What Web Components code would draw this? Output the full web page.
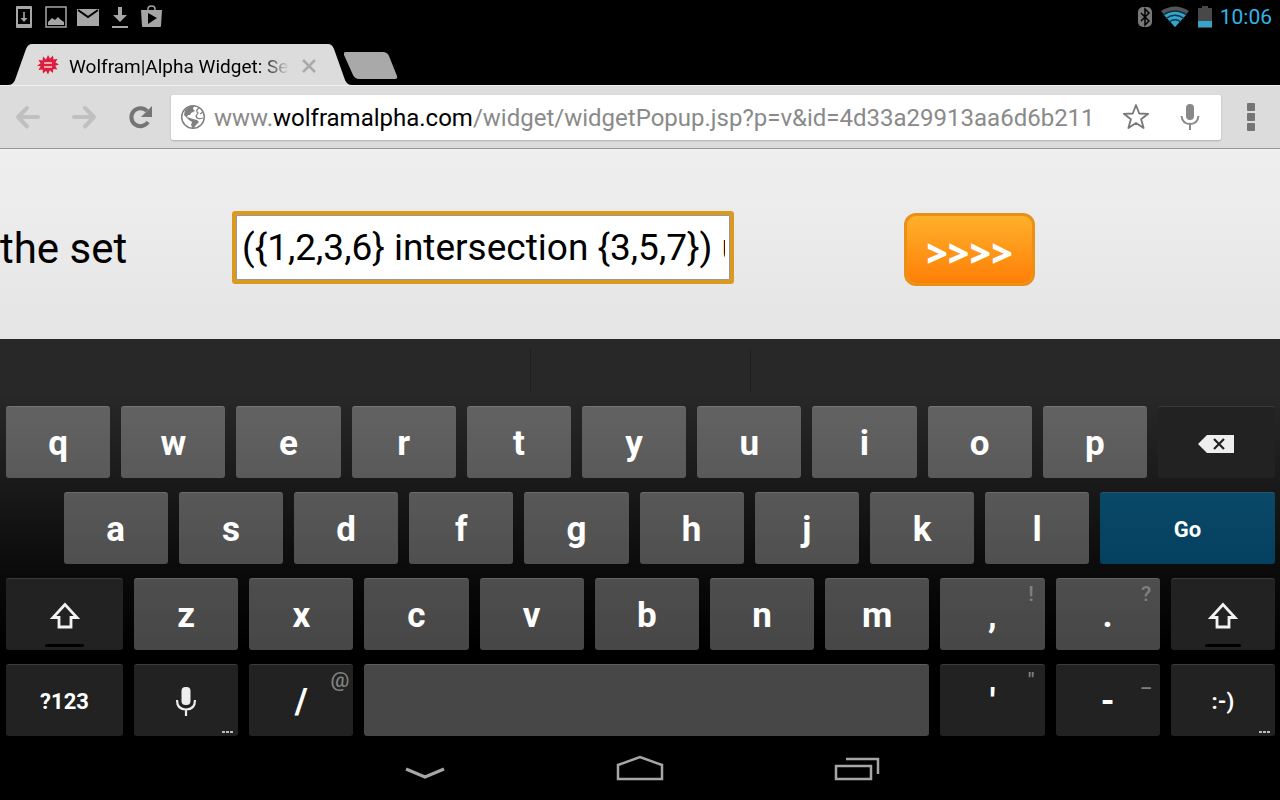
<!DOCTYPE html>
<html lang="en">
<head>
<meta charset="utf-8">
<meta name="viewport" content="width=device-width, initial-scale=1">
<title>Wolfram|Alpha Widget: Set Operations</title>
<style>
    html, body {
        margin: 0;
        background: #000;
    }

    body {
        min-height: 100vh;
        display: flex;
        flex-direction: column;
        font-family: Roboto, "Noto Sans", sans-serif;
        overflow-x: hidden;
    }

    widget-page {
        flex: 1;
    }
</style>
</head>
<body>
<status-bar></status-bar>
<tab-strip>Wolfram|Alpha Widget: Set Operations</tab-strip>
<browser-toolbar></browser-toolbar>
<widget-page>the set</widget-page>
<soft-keyboard></soft-keyboard>
<system-nav></system-nav>

<script>
class StatusBar extends HTMLElement {
    connectedCallback() {
        this.attachShadow({ mode: 'open' });
        this.shadowRoot.innerHTML = `
            <style>
                :host {
                    display: flex;
                    justify-content: space-between;
                    height: 34px;
                    padding: 0 8px 0 14px;
                    background: #000;
                    color: #33b5e5;
                }

                .group {
                    display: flex;
                    align-items: center;
                    gap: 8px;
                }

                svg {
                    display: block;
                }

                time {
                    font-size: 21px;
                    line-height: 36px;
                }
            </style>
            <div class="group">
                <svg width="22" height="24" viewBox="0 0 22 24"><path fill="#a6a6a6" fill-rule="evenodd" d="M3 1h14q1 0 1 1v20q0 1-1 1H3q-1 0-1-1V2q0-1 1-1zM4 4v15h12V4zM9.200 7h1.600v6h2.700l-3.500 4-3.500-4h2.700z"/></svg>
                <svg width="24" height="24" viewBox="0 0 24 24"><path fill="none" stroke="#a6a6a6" stroke-width="1.500" d="M2 2h20v20H2z"/><path fill="#a6a6a6" d="M4 20v-3l4-4 3 2 3-3 3 3 3 2v3z"/></svg>
                <svg width="24" height="24" viewBox="0 0 24 24"><path fill="#a6a6a6" d="M1 4h22v17H1z"/><path fill="none" stroke="#000" stroke-width="2" d="M2 5l10 7 10-7"/></svg>
                <svg width="24" height="24" viewBox="0 0 24 24"><path fill="#a6a6a6" d="M10 2h4v8h5l-7 7-7-7h5zM4 21h16v2H4z"/></svg>
                <svg width="24" height="24" viewBox="0 0 24 24"><path fill="#a6a6a6" d="M1 5h21l-1 16q0 1-1 1H3q-1 0-1-1z"/><path fill="none" stroke="#a6a6a6" stroke-width="1.500" d="M8 6V4q0-3 3.500-3T15 4v2"/><path fill="#000" d="M8 8l9 5-9 6z"/></svg>
            </div>
            <div class="group">
                <svg width="14" height="22" viewBox="0 0 14 22"><rect y="1" width="14" height="20" rx="5" fill="#777"/><path fill="none" stroke="#000" stroke-width="1.500" d="M3 7l8 8-4 4V3l4 4-8 8"/></svg>
                <svg width="30" height="22" viewBox="0 0 30 22"><path fill="#555" d="M1 5Q15-4 29 5L15 21z"/><path fill="#33a5cc" d="M4 9Q15 2 26 9L15 21z"/><path fill="none" stroke="#0a3444" stroke-width="1.300" d="M3 9Q15 1 27 9M6 12.500Q15 6 24 12.500M9 16Q15 11.500 21 16"/></svg>
                <svg width="14" height="22" viewBox="0 0 14 22"><path fill="#484848" d="M4 0h6v2h4v20H0V2h4z"/><path fill="#33a5cc" d="M0 15h14v6H0z"/></svg>
                <time datetime="10:06">10:06</time>
            </div>
        `;
    }
}

class TabStrip extends HTMLElement {
    connectedCallback() {
        this.attachShadow({ mode: 'open' });
        this.shadowRoot.innerHTML = `
            <style>
                :host {
                    display: flex;
                    align-items: flex-end;
                    height: 51px;
                    background: #000;
                    border-bottom: 1px solid #f0f0f0;
                }

                svg {
                    display: block;
                    flex: none;
                }

                .tab {
                    display: flex;
                    height: 41px;
                    margin-bottom: -1px;
                    padding-bottom: 1px;
                }

                .body {
                    display: flex;
                    align-items: center;
                    width: 296px;
                    background: #dcdcdc;
                }

                .icon {
                    margin-left: 3px;
                }

                .title {
                    width: 222px;
                    margin: 4px 0 0 8px;
                    font-size: 19px;
                    line-height: 24px;
                    color: #000;
                    white-space: nowrap;
                    overflow: hidden;
                    -webkit-mask-image: linear-gradient(90deg, #000 192px, transparent 220px);
                    mask-image: linear-gradient(90deg, #000 192px, transparent 220px);
                }

                button {
                    border: 0;
                    padding: 0;
                    background: none;
                }

                .close {
                    margin: 2px 0 0 10px;
                }

                .new {
                    padding-bottom: 6px;
                    margin-left: -8px;
                }
            </style>
            <div class="tab">
                <svg width="32" height="41" viewBox="0 0 32 41"><path fill="#dcdcdc" d="M0 41h8q5 0 7-5L26 5q2-5 6-5v41z"/></svg>
                <div class="body">
                    <svg class="icon" width="26" height="26" viewBox="-13 -13 26 26">
                        <path fill="#dc1e3c" d="M0-10l2 3.600 3-3 .5 4 4-.8-2 3.600 3.500 2-3.700 1.400 2 3.600-4-.5-.4 4-3-2.700L0 9.500l-2-3.800-3 2.700-.5-4-4 .5 2-3.600L-11 .8l3.500-2.400-2-3.600 4 .8.5-4 3 3z"/>
                        <path stroke="#fff" stroke-width="1.500" opacity=".8" d="M-4-2h8M-4 2h8"/>
                    </svg>
                    <span class="title"><slot></slot></span>
                    <button class="close" aria-label="Close tab"><svg width="16" height="16" viewBox="0 0 16 16"><path stroke="#aaa" stroke-width="2.500" d="M2 2l12 12M14 2L2 14"/></svg></button>
                </div>
                <svg width="24" height="41" viewBox="0 0 24 41"><path fill="#dcdcdc" d="M0 0q4 0 6 5l11 31q2 5 7 5H0z"/></svg>
            </div>
            <button class="new" aria-label="New tab"><svg width="54" height="27" viewBox="0 0 54 27"><path fill="#a9a9a9" d="M2 0h37q4 0 6 4l8 20q1 3-2 3H15q-4 0-6-4L0 3q-1-3 2-3z"/></svg></button>
        `;
    }
}

class BrowserToolbar extends HTMLElement {
    connectedCallback() {
        this.attachShadow({ mode: 'open' });
        this.shadowRoot.innerHTML = `
            <style>
                :host {
                    display: flex;
                    align-items: center;
                    box-sizing: border-box;
                    height: 63px;
                    background: #dcdcdc;
                    border-bottom: 1px solid #999;
                }

                svg {
                    display: block;
                }

                button {
                    flex: none;
                    display: flex;
                    align-items: center;
                    justify-content: center;
                    width: 56px;
                    height: 45px;
                    padding: 0;
                    border: 0;
                    background: none;
                }

                .omnibox {
                    flex: 1;
                    display: flex;
                    align-items: center;
                    min-width: 0;
                    height: 45px;
                    margin-left: 3px;
                    background: #fff;
                    border-radius: 2px;
                    box-shadow: 0 1px 2px rgba(0, 0, 0, 0.2);
                }

                .globe {
                    flex: none;
                    margin: 0 8px 0 9px;
                }

                .field {
                    flex: 1;
                    position: relative;
                    min-width: 0;
                    height: 45px;
                }

                .field input {
                    width: 100%;
                    height: 45px;
                    box-sizing: border-box;
                    border: 0;
                    padding: 0;
                    background: none;
                    outline: none;
                }

                .field input, .field label {
                    font: 24px/46px Roboto, "Noto Sans", sans-serif;
                }

                /* formatted address, lies over the empty input until it gets focus */
                .field label {
                    position: absolute;
                    inset: 0;
                    color: #8a8a8a;
                    white-space: nowrap;
                    overflow: hidden;
                    cursor: text;
                }

                .field input:focus + label {
                    display: none;
                }

                b {
                    font-weight: 400;
                    color: #000;
                }

                .omnibox button {
                    width: 46px;
                }

                .omnibox .mic {
                    width: 62px;
                }

                .menu {
                    width: 59px;
                }
            </style>
            <button aria-label="Back"><svg width="26" height="26" viewBox="0 0 26 26"><path fill="none" stroke="#c0c0c0" stroke-width="4" stroke-linecap="round" stroke-linejoin="round" d="M23 13H3M12 4L3 13l9 9.500"/></svg></button>
            <button aria-label="Forward"><svg width="26" height="26" viewBox="0 0 26 26"><path fill="none" stroke="#c0c0c0" stroke-width="4" stroke-linecap="round" stroke-linejoin="round" d="M3 13h20M14 4l9 9-9 9.500"/></svg></button>
            <button aria-label="Reload"><svg width="26" height="26" viewBox="0 0 26 26"><path fill="none" stroke="#757575" stroke-width="4" d="M20 7A9 9 0 1 0 21 18"/><path fill="#757575" d="M25 2v11H14z"/></svg></button>
            <div class="omnibox">
                <svg class="globe" width="26" height="26" viewBox="0 0 26 26"><circle cx="13" cy="13" r="11.300" fill="none" stroke="#808080" stroke-width="1.500"/><path fill="#808080" d="M5 6l5-4 4 0-1 3 2 2-4 2-1 2-2 0-1 2 3 1 3 1 4 1 2 2-3 3-3 4-2-4 1-3-3-2-3-3-2-2z"/><path fill="none" stroke="#808080" stroke-width="1.300" d="M19 4q-4 3-1 5l-2 3q1 4 7 2M23 8l-3 2"/></svg>
                <div class="field">
                    <input id="url" type="text" inputmode="url" autocomplete="off">
                    <label for="url">www.<b>wolframalpha.com</b>/widget/widgetPopup.jsp?p=v&amp;id=4d33a29913aa6d6b211</label>
                </div>
                <button aria-label="Bookmark"><svg width="28" height="28" viewBox="0 0 28 28"><path fill="none" stroke="#777" stroke-width="1.800" stroke-linejoin="round" d="M14 2l3.200 8.500 9 .3-7.100 5.500 2.500 8.700-7.600-5-7.600 5 2.500-8.700-7.100-5.500 9-.3z"/></svg></button>
                <button class="mic" aria-label="Voice search"><svg width="20" height="28" viewBox="0 0 20 28"><rect x="6" y="1" width="8" height="16" rx="4" fill="#888"/><path fill="none" stroke="#888" stroke-width="2" d="M1.500 13q1 8 8.500 8t8.500-8M10 21v6"/></svg></button>
            </div>
            <button class="menu" aria-label="Menu"><svg width="8" height="28" viewBox="0 0 8 28"><g fill="#757575"><rect width="8" height="8" rx="1"/><rect y="10" width="8" height="8" rx="1"/><rect y="20" width="8" height="8" rx="1"/></g></svg></button>
        `;

        const input = this.shadowRoot.querySelector('input');
        const label = this.shadowRoot.querySelector('label');
        input.addEventListener('focus', () => {
            input.value = label.textContent;
        });
        input.addEventListener('blur', () => {
            input.value = '';
        });
    }
}

class WidgetPage extends HTMLElement {
    connectedCallback() {
        this.attachShadow({ mode: 'open' });
        this.shadowRoot.innerHTML = `
            <style>
                :host {
                    display: block;
                    min-height: 190px;
                    background: linear-gradient(#efefef, #e5e5e5);
                }

                form {
                    display: flex;
                    align-items: center;
                    box-sizing: border-box;
                    min-height: 190px;
                    padding-top: 10px;
                }

                label {
                    flex: none;
                    width: 236px;
                    font-size: 42px;
                    line-height: 48px;
                    color: #000;
                }

                input {
                    box-sizing: border-box;
                    width: 494px;
                    height: 65px;
                    margin: 0 174px 4px 0;
                    padding: 0 4px 0 5px;
                    border: 1px solid #999;
                    background: #fff;
                    font: 37px Roboto, "Noto Sans", sans-serif;
                    color: #000;
                    outline: none;
                    box-shadow: 0 0 0 4px #db991f;
                    border-radius: 1px;
                }

                button {
                    width: 131px;
                    height: 73px;
                    padding: 6px 0 0;
                    border: 3px solid #ea9014;
                    border-radius: 12px;
                    background: linear-gradient(#ffb02b, #fe7f08);
                    background-clip: padding-box;
                    background-color: #ea9014;
                    font: 800 37px "Open Sans", sans-serif;
                    line-height: 61px;
                    color: #fff;
                }
            </style>
            <form>
                <label for="set"><slot></slot></label>
                <input id="set" type="text" value="({1,2,3,6} intersection {3,5,7}) union">
                <button type="button">&gt;&gt;&gt;&gt;</button>
            </form>
        `;
    }
}

class KbKey extends HTMLElement {
    connectedCallback() {
        const hint = this.getAttribute('hint') || '';
        const name = this.getAttribute('name');
        this.attachShadow({ mode: 'open' });
        this.shadowRoot.innerHTML = `
            <style>
                :host {
                    display: block;
                    flex: none;
                    box-sizing: border-box;
                    width: calc(var(--w, 9) * 1%);
                    padding: 0 5px 0 6px;
                }

                button {
                    display: flex;
                    align-items: center;
                    justify-content: center;
                    position: relative;
                    width: 100%;
                    height: 72px;
                    padding: 2px 0 0;
                    border: 0;
                    border-top: 1px solid rgba(255, 255, 255, 0.12);
                    border-radius: 3px;
                    background: rgba(255, 255, 255, 0.28);
                    color: #fff;
                    font: 700 35px Roboto, "Noto Sans", sans-serif;
                }

                :host([dark]) button {
                    background-color: #222;
                }

                :host([go]) button {
                    background: linear-gradient(#0b4969, #044060);
                }

                :host([small]) button {
                    font-size: 22px;
                }

                .hint {
                    position: absolute;
                    top: 3px;
                    right: 4px;
                    width: 19px;
                    text-align: center;
                    font-size: 21px;
                    line-height: 25px;
                    font-weight: 500;
                    color: #808080;
                }

                .more {
                    position: absolute;
                    right: 5px;
                    bottom: 3px;
                }

                .lock {
                    position: absolute;
                    bottom: 3px;
                    left: 33%;
                    right: 33%;
                    height: 3px;
                    border-radius: 2px;
                    background: #000;
                }

                :host(:not([lock])) .lock,
                :host(:not([more])) .more {
                    display: none;
                }
            </style>
            <button${name ? ` aria-label="${name}"` : ''}>
                <slot></slot>
                ${hint ? `<span class="hint">${hint}</span>` : ''}
                <svg class="more" width="11" height="2" viewBox="0 0 11 2"><path fill="#bbb" d="M0 0h3v2H0zM4 0h3v2H4zM8 0h3v2H8z"/></svg>
                <span class="lock"></span>
            </button>
        `;
    }
}

const letters = (row) => [...row].map(c => `<kb-key>${c}</kb-key>`).join('');

const shiftIcon = '<svg width="32" height="28" viewBox="0 0 32 28"><path fill="none" stroke="#f2f2f2" stroke-width="2.800" d="M16 2.500L4 15.500h6V25h12v-9.500h6z"/></svg>';

class SoftKeyboard extends HTMLElement {
    connectedCallback() {
        this.attachShadow({ mode: 'open' });
        this.shadowRoot.innerHTML = `
            <style>
                :host {
                    display: block;
                    background: linear-gradient(#282828, #282828 14%, #1a1a1a 36%, #0b0b0b 58%, #000 78%);
                }

                .suggestions {
                    display: grid;
                    grid-template-columns: 1fr 220px 1fr;
                    height: 43px;
                    padding: 10px 0 14px;
                }

                .suggestions span + span {
                    border-left: 1px solid #1f1f1f;
                }

                .rows {
                    display: flex;
                    flex-direction: column;
                    gap: 14px;
                }

                .row {
                    display: flex;
                }

                .indent::before {
                    content: "";
                    width: 4.5%;
                }

                svg {
                    display: block;
                }
            </style>
            <div class="suggestions"><span></span><span></span><span></span></div>
            <div class="rows">
                <div class="row">
                    ${letters('qwertyuiop')}
                    <kb-key dark name="Backspace" style="--w:10"><svg width="36" height="18" viewBox="0 0 36 18"><path fill="#eee" d="M9 0h27v18H9L0 9z"/><path stroke="#222" stroke-width="2.200" d="M16 4l10 10M26 4L16 14"/></svg></kb-key>
                </div>
                <div class="row indent">
                    ${letters('asdfghjkl')}
                    <kb-key go small style="--w:14.5">Go</kb-key>
                </div>
                <div class="row">
                    <kb-key dark lock name="Shift" style="--w:10">${shiftIcon}</kb-key>
                    ${letters('zxcvbnm')}
                    <kb-key hint="!">,</kb-key>
                    <kb-key hint="?">.</kb-key>
                    <kb-key dark lock name="Shift">${shiftIcon}</kb-key>
                </div>
                <div class="row">
                    <kb-key dark small style="--w:10">?123</kb-key>
                    <kb-key dark more name="Voice input"><svg width="22" height="30" viewBox="0 0 22 30"><rect x="6.500" y="0" width="9" height="18" rx="4" fill="#eee"/><path fill="none" stroke="#eee" stroke-width="2.200" d="M2 13q0 9.500 9 9.500t9-9.500M11 23v6"/></svg></kb-key>
                    <kb-key dark hint="@">/</kb-key>
                    <kb-key name="Space" style="--w:45"></kb-key>
                    <kb-key dark hint="&quot;">'</kb-key>
                    <kb-key dark hint="_">-</kb-key>
                    <kb-key dark small more>:-)</kb-key>
                </div>
            </div>
        `;
    }
}

class SystemNav extends HTMLElement {
    connectedCallback() {
        this.attachShadow({ mode: 'open' });
        this.shadowRoot.innerHTML = `
            <style>
                :host {
                    display: flex;
                    justify-content: center;
                    height: 64px;
                    background: #000;
                }

                button {
                    display: flex;
                    align-items: center;
                    justify-content: center;
                    width: 216px;
                    padding: 0;
                    border: 0;
                    background: none;
                }

                path {
                    fill: none;
                    stroke: #a6a6a6;
                    stroke-width: 2.500;
                }
            </style>
            <button aria-label="Hide keyboard"><svg width="48" height="28" viewBox="0 0 48 28"><path style="stroke-width:3" d="M6 15l19 8 19-8"/></svg></button>
            <button aria-label="Home"><svg width="48" height="28" viewBox="0 0 48 28"><path d="M2 25V11l22-8 22 8v14z"/></svg></button>
            <button aria-label="Recent apps"><svg width="48" height="28" viewBox="0 0 48 28"><path d="M4 12h35v13H4zM14 5h32v15"/></svg></button>
        `;
    }
}

customElements.define('status-bar', StatusBar);
customElements.define('tab-strip', TabStrip);
customElements.define('browser-toolbar', BrowserToolbar);
customElements.define('widget-page', WidgetPage);
customElements.define('kb-key', KbKey);
customElements.define('soft-keyboard', SoftKeyboard);
customElements.define('system-nav', SystemNav);
</script>
</body>
</html>
